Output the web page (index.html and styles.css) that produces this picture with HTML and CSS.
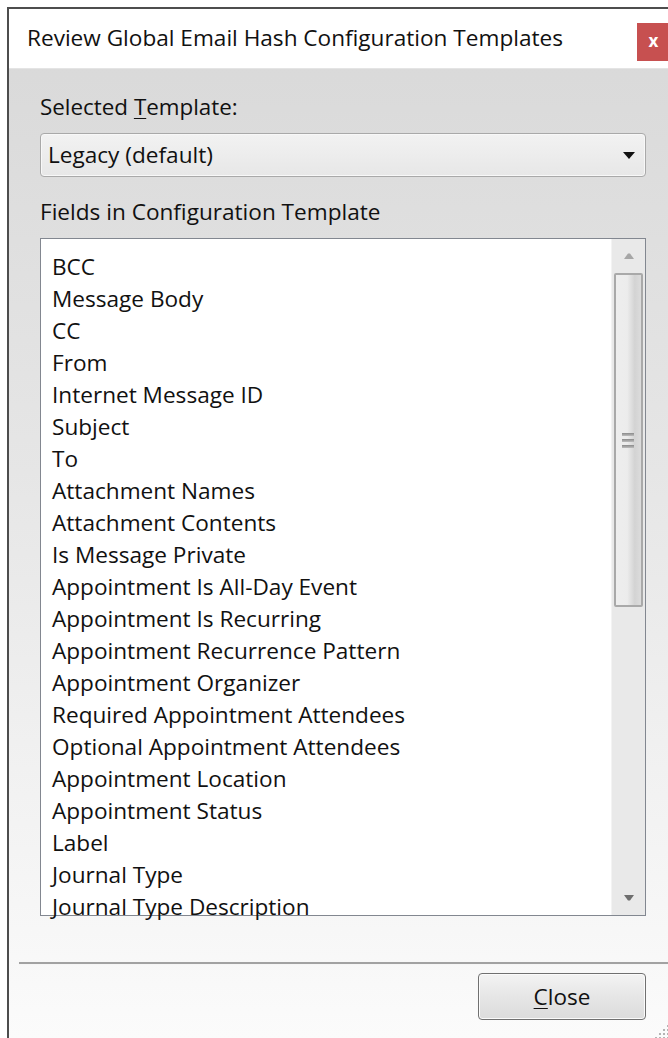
FILE: index.html
```html
<!DOCTYPE html>
<html lang="en">
<head>
<meta charset="utf-8">
<title>Review Global Email Hash Configuration Templates</title>
<link rel="stylesheet" href="styles.css">
</head>
<body>
<div class="window">
  <header class="titlebar">
    <span class="title">Review Global Email Hash Configuration Templates</span>
    <button class="close-x" type="button">x</button>
  </header>
  <main class="content">
    <label class="label">Selected <u>T</u>emplate:</label>
    <div class="combo">
      <span class="combo-value">Legacy (default)</span>
      <svg class="combo-arrow" width="12" height="8" viewBox="0 0 12 8"><path d="M0 0H12L6 7Z" fill="#111"/></svg>
    </div>
    <div class="label label-fields">Fields in Configuration Template</div>
    <div class="listbox">
      <ul class="items">
        <li>BCC</li>
        <li>Message Body</li>
        <li>CC</li>
        <li>From</li>
        <li>Internet Message ID</li>
        <li>Subject</li>
        <li>To</li>
        <li>Attachment Names</li>
        <li>Attachment Contents</li>
        <li>Is Message Private</li>
        <li>Appointment Is All-Day Event</li>
        <li>Appointment Is Recurring</li>
        <li>Appointment Recurrence Pattern</li>
        <li>Appointment Organizer</li>
        <li>Required Appointment Attendees</li>
        <li>Optional Appointment Attendees</li>
        <li>Appointment Location</li>
        <li>Appointment Status</li>
        <li>Label</li>
        <li>Journal Type</li>
        <li>Journal Type Description</li>
      </ul>
      <div class="scrollbar">
        <svg class="sb-arrow" width="12" height="8" viewBox="0 0 12 8"><path d="M1 7H11L7 1.5H5Z" fill="#a6a6a6"/></svg>
        <div class="thumb">
          <div class="grip"><i></i><i></i><i></i></div>
        </div>
        <div class="track-rest"></div>
        <svg class="sb-arrow sb-arrow-down" width="12" height="8" viewBox="0 0 12 8"><path d="M1 1H11L7 6.5H5Z" fill="#6e6e6e"/></svg>
      </div>
    </div>
  </main>
  <footer class="footer">
    <div class="separator"></div>
    <div class="buttons">
      <button class="btn" type="button"><u>C</u>lose</button>
    </div>
    <div class="resize-grip"></div>
  </footer>
</div>
</body>
</html>
```
FILE: styles.css
```css
html, body {
  margin: 0;
  padding: 0;
  background: #ffffff;
  overflow: hidden;
}

body {
  width: 668px;
  height: 1038px;
  font-family: "Open Sans", "Noto Sans", sans-serif;
  color: #111;
}

.window {
  margin: 7px 0 0 7px;
  width: 661px;
  height: 1031px;
  box-sizing: border-box;
  border-top: 2px solid #4d4d4d;
  border-left: 2px solid #4d4d4d;
  display: flex;
  flex-direction: column;
  background: linear-gradient(#d8d8d8 0%, #e6e6e6 45%, #fbfbfb 100%);
}

.titlebar {
  height: 59px;
  flex: none;
  background: #ffffff;
  border-bottom: 1px solid #e4e4e4;
  display: flex;
  align-items: flex-start;
  justify-content: space-between;
}

.title {
  margin: 14px 0 0 18px;
  font-size: 22.6px;
  line-height: 30px;
  color: #111;
  white-space: nowrap;
}

.close-x {
  margin-top: 14px;
  width: 31px;
  height: 38px;
  border: none;
  padding: 0 0 4px 2px;
  background: #c75050;
  color: #fff;
  font-family: "Open Sans", sans-serif;
  font-weight: 700;
  font-size: 17px;
  line-height: 1;
  flex: none;
}

.content {
  padding: 23px 22px 0 31px;
  display: flex;
  flex-direction: column;
}

.label {
  display: block;
  font-size: 22.4px;
  line-height: 30px;
  color: #111;
}

.label u {
  text-decoration-thickness: 1px;
  text-underline-offset: 3px;
}

.combo {
  margin-top: 11px;
  height: 44px;
  box-sizing: border-box;
  border: 1px solid #a9a9a9;
  border-radius: 4px;
  background: linear-gradient(#f2f2f2, #e7e7e7);
  box-shadow: inset 0 0 0 1px #f8f8f8;
  display: flex;
  align-items: center;
  justify-content: space-between;
  padding: 0 10px 0 7px;
}

.combo-value {
  font-size: 22.6px;
  line-height: 30px;
  color: #111;
}

.combo-arrow {
  margin-top: 1px;
}

.label-fields {
  margin-top: 20px;
  font-size: 22.6px;
}

.listbox {
  margin-top: 11px;
  height: 678px;
  box-sizing: border-box;
  border: 1px solid #828790;
  background: #ffffff;
  display: flex;
}

.items {
  flex: 1;
  list-style: none;
  margin: 0;
  padding: 12px 0 0 11px;
}

.items li {
  height: 32px;
  line-height: 32px;
  font-size: 22.6px;
  color: #111;
  white-space: nowrap;
}

.scrollbar {
  width: 33px;
  flex: none;
  background: #e9e9e9;
  border-left: 1px solid #f3f3f3;
  display: flex;
  flex-direction: column;
  align-items: center;
}

.sb-arrow {
  flex: none;
  margin: 13px 0;
}

.sb-arrow-down {
  margin: 11px 0 13px;
}

.thumb {
  width: 29px;
  height: 334px;
  box-sizing: border-box;
  border: 2px solid #a9a9a9;
  border-radius: 2px;
  background: linear-gradient(90deg, #eeeeee 0%, #ececec 45%, #d3d3d3 75%, #dcdcdc 100%);
  display: flex;
  align-items: center;
  justify-content: center;
}

.grip {
  display: flex;
  flex-direction: column;
  gap: 3px;
  margin-right: 2px;
}

.grip i {
  display: block;
  width: 12px;
  height: 3px;
  background: linear-gradient(#8a8a8a, #bdbdbd);
}

.track-rest {
  flex: 1;
}

.footer {
  flex: 1;
  display: flex;
  flex-direction: column;
  position: relative;
}

.separator {
  margin: 46px 0 0 10px;
  height: 2px;
  background: #a2a2a2;
  border-bottom: 1px solid #f6f6f6;
}

.buttons {
  display: flex;
  justify-content: flex-end;
  padding: 8px 22px 0 0;
}

.btn {
  width: 168px;
  height: 47px;
  box-sizing: border-box;
  border: 1px solid #707070;
  border-radius: 4px;
  background: linear-gradient(#f3f3f3, #e6e6e6 50%, #dcdcdc);
  box-shadow: inset 0 0 0 1px #fbfbfb;
  font-family: "Open Sans", sans-serif;
  font-size: 22.5px;
  line-height: 30px;
  color: #111;
  padding: 0;
}

.btn u {
  text-decoration-thickness: 1px;
  text-underline-offset: 3px;
}

.resize-grip {
  position: absolute;
  right: 0;
  bottom: 0;
  width: 14px;
  height: 14px;
  background-image: radial-gradient(circle, #b4b4b4 1px, transparent 1.3px);
  background-size: 4px 4px;
  clip-path: polygon(100% 0, 100% 100%, 0 100%);
}
```
